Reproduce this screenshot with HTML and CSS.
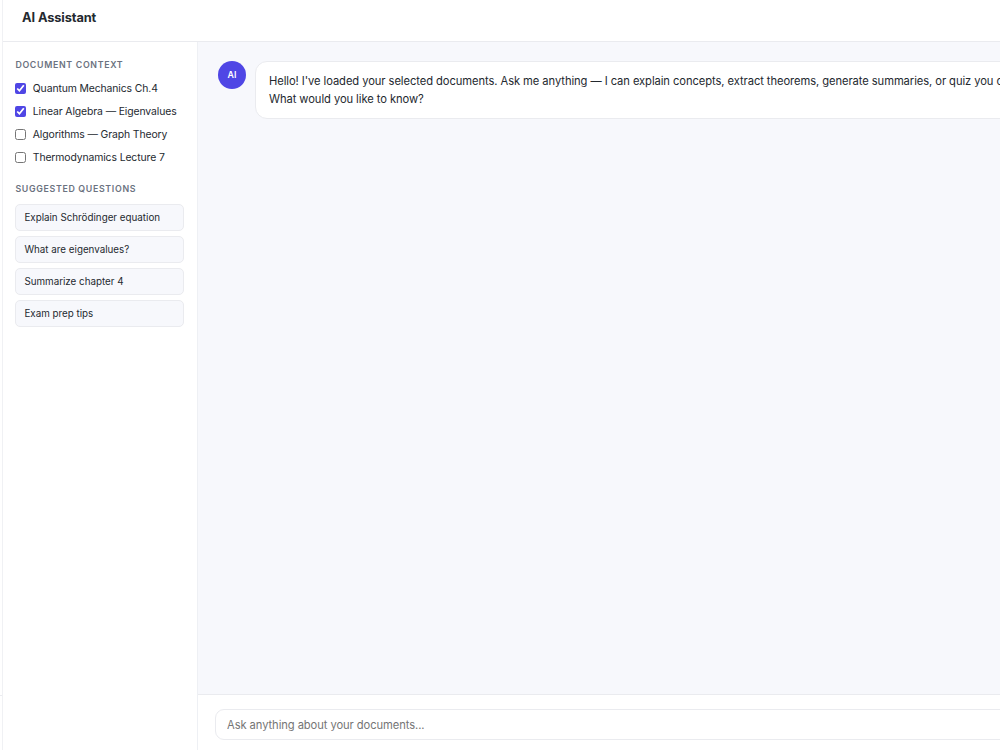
FILE: index.html
```html
<!DOCTYPE html>
<html lang="en">

<head>
    <meta charset="UTF-8">
    <meta name="viewport" content="width=device-width, initial-scale=1.0">
    <title>AI Assistant</title>
    <link rel="stylesheet" href="styles.css">
</head>

<body>
    <div class="nav-edge">
        <div class="nav-footer"></div>
    </div>

    <div class="main">
        <header class="topbar">
            <h1>AI Assistant</h1>
        </header>

        <div class="content">
            <aside class="context">
                <h2>Document Context</h2>
                <div class="docs">
                    <label><input type="checkbox" checked>Quantum Mechanics Ch.4</label>
                    <label><input type="checkbox" checked>Linear Algebra — Eigenvalues</label>
                    <label><input type="checkbox">Algorithms — Graph Theory</label>
                    <label><input type="checkbox">Thermodynamics Lecture 7</label>
                </div>

                <h2>Suggested Questions</h2>
                <div class="questions">
                    <button>Explain Schrödinger equation</button>
                    <button>What are eigenvalues?</button>
                    <button>Summarize chapter 4</button>
                    <button>Exam prep tips</button>
                </div>
            </aside>

            <section class="chat">
                <div class="messages">
                    <div class="message">
                        <div class="avatar">AI</div>
                        <div class="bubble">Hello! I've loaded your selected documents. Ask me anything — I can explain concepts, extract theorems, generate summaries, or quiz you on the material.<br>What would you like to know?</div>
                    </div>
                </div>
                <div class="composer">
                    <input type="text" placeholder="Ask anything about your documents...">
                </div>
            </section>
        </div>
    </div>
</body>

</html>
```

FILE: styles.css
```css
* {
    box-sizing: border-box;
    margin: 0;
    padding: 0;
}

body {
    display: flex;
    height: 100vh;
    overflow: hidden;
    font-family: Inter, sans-serif;
    color: #24292f;
    background: #fff;
}

.nav-edge {
    flex: 0 0 3px;
    display: flex;
    align-items: flex-end;
    border-right: 1px solid #f0f1f4;
}

.nav-footer {
    width: 2px;
    height: 55px;
    border-top: 1px solid #ebecf0;
}

.main {
    flex: 1;
    min-width: 0;
    display: flex;
    flex-direction: column;
}

.topbar {
    height: 42px;
    padding: 8px 19px 0;
    border-bottom: 1px solid #eaebef;
}

.topbar h1 {
    font-size: 12.8px;
    line-height: 19px;
    font-weight: 700;
    letter-spacing: -0.1px;
}

.content {
    flex: 1;
    display: flex;
    min-height: 0;
}

.context {
    width: 195px;
    padding: 16px 12.6px 0 12.4px;
    border-right: 1px solid #eef0f4;
}

.context h2 {
    font-size: 8.8px;
    line-height: 14px;
    font-weight: 600;
    letter-spacing: 0.68px;
    text-transform: uppercase;
    color: #6b7280;
}

.docs {
    margin: 5px 0 13px;
}

.docs label {
    display: flex;
    align-items: center;
    gap: 6.4px;
    height: 23px;
    padding-bottom: 1px;
    font-size: 10.4px;
    letter-spacing: -0.11px;
    white-space: nowrap;
}

.docs input {
    width: 11px;
    height: 11px;
    accent-color: #4f46e5;
}

.questions {
    display: flex;
    flex-direction: column;
    gap: 5px;
    margin-top: 8px;
}

.questions button {
    height: 27px;
    padding: 0 8px 1px;
    border: 1px solid #eaebef;
    border-radius: 5px;
    background: #f7f8fc;
    font-family: inherit;
    font-size: 9.8px;
    text-align: left;
    color: #24292f;
}

.chat {
    flex: 1;
    min-width: 0;
    display: flex;
    flex-direction: column;
    background: #f7f8fc;
}

.messages {
    flex: 1;
    padding: 19px 0 19px 20px;
    overflow: hidden;
}

.message {
    display: flex;
    gap: 9px;
}

.avatar {
    flex: none;
    display: flex;
    align-items: center;
    justify-content: center;
    width: 28px;
    height: 28px;
    padding-bottom: 1px;
    border-radius: 50%;
    background: #4f46e5;
    color: #fff;
    font-size: 8.8px;
    font-weight: 600;
}

.bubble {
    flex: none;
    height: 58px;
    padding: 10px 13px;
    border: 1px solid #eaebef;
    border-radius: 12px;
    background: #fff;
    font-size: 11.2px;
    line-height: 18px;
    letter-spacing: -0.075px;
    white-space: nowrap;
}

.composer {
    height: 56px;
    padding: 14px 0 0 17px;
    overflow: hidden;
    border-top: 1px solid #eaebef;
    background: #fff;
}

.composer input {
    width: calc(100% + 20px);
    height: 31px;
    padding: 0 11px;
    border: 1px solid #eaebef;
    border-radius: 9px;
    font-family: inherit;
    font-size: 11.2px;
    letter-spacing: -0.08px;
}

.composer input::placeholder {
    color: #757575;
}
```
